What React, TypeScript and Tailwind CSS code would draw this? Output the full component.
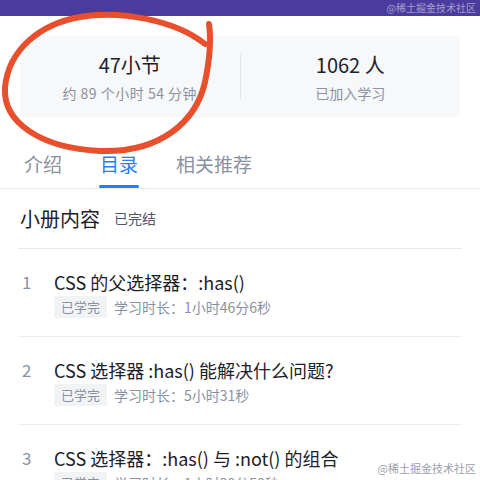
import React from "react"

const font = { fontFamily: '"Noto Sans CJK SC", "Noto Sans", sans-serif' }

const sections = [
  { no: 1, title: "CSS 的父选择器：:has()", time: "学习时长：1小时46分6秒" },
  { no: 2, title: "CSS 选择器 :has() 能解决什么问题?", time: "学习时长：5小时31秒" },
  { no: 3, title: "CSS 选择器：:has() 与 :not() 的组合", time: "学习时长：1小时30分50秒" },
]

export default function App() {
  return (
    <div className="relative w-[480px] h-[480px] overflow-hidden bg-white" style={font}>
      <div className="h-[16px] bg-[#4a3b9c] flex items-center justify-end pr-[4px]">
        <span className="text-[10px] leading-none text-white/50">@稀土掘金技术社区</span>
      </div>

      <div className="px-[20px] pt-[20px]">
        <div className="h-[82px] rounded-[6px] bg-[#f7f8fa] flex items-center">
          <div className="flex-1 flex flex-col items-center">
            <div className="text-[20px] leading-[28px] text-[#1d2129]">47小节</div>
            <div className="mt-[4px] text-[14px] leading-[20px] text-[#8a919f] tracking-[0.5px]">约 89 个小时 54 分钟</div>
          </div>
          <div className="w-px h-[46px] bg-[#e4e6eb]" />
          <div className="flex-1 flex flex-col items-center">
            <div className="text-[20px] leading-[28px] text-[#1d2129]">1062 人</div>
            <div className="mt-[4px] text-[14px] leading-[20px] text-[#8a919f]">已加入学习</div>
          </div>
        </div>
      </div>

      <div className="mt-[28px] h-[43px] flex items-start gap-[38px] pl-[24px] border-b border-[#e9eaee]">
        <div className="h-full flex flex-col justify-between">
          <span className="text-[19px] leading-[36px] text-[#8a919f]">介绍</span>
        </div>
        <div className="h-full flex flex-col justify-between">
          <span className="text-[19px] leading-[36px] text-[#1e80ff]">目录</span>
          <div className="h-[3px] -mx-[1px] rounded-full bg-[#1e80ff]" />
        </div>
        <div className="h-full flex flex-col justify-between">
          <span className="text-[19px] leading-[36px] text-[#8a919f]">相关推荐</span>
        </div>
      </div>

      <div className="mx-[18px] h-[60px] border-b border-[#e9eaee] flex items-center gap-[14px] pl-[2px]">
        <span className="text-[20px] text-[#1d2129]">小册内容</span>
        <span className="text-[14px] text-[#515767]">已完结</span>
      </div>

      {sections.map((s) => (
        <div key={s.no} className="mx-[18px] h-[88px] border-b border-[#eceef1] pt-[21px] flex">
          <div className="w-[36px] pl-[4px] text-[17px] leading-[24px] text-[#8a919f]">{s.no}</div>
          <div className="flex flex-col">
            <div className="text-[18px] leading-[24px] text-[#1d2129]">{s.title}</div>
            <div className="mt-[2px] flex items-center gap-[7px]">
              <span className="h-[22px] px-[7px] bg-[#f2f3f5] text-[13px] leading-[22px] text-[#8a919f]">已学完</span>
              <span className="text-[14px] text-[#8a919f]">{s.time}</span>
            </div>
          </div>
        </div>
      ))}

      <span className="absolute right-[4px] top-[460px] text-[11px] text-[#9aa0aa] [text-shadow:0_0_2px_#fff]">@稀土掘金技术社区</span>

      <svg className="absolute left-0 top-0 pointer-events-none" width="240" height="170" viewBox="0 0 240 170">
        <path
          d="M205 44 C175 20 120 10 80 17 C40 24 8 50 5 88 C3 122 40 148 100 151 C160 153 196 122 205 82 C210 58 211 38 209 24"
          fill="none"
          stroke="#e8502d"
          strokeWidth="6"
          strokeLinecap="round"
        />
      </svg>
    </div>
  )
}
